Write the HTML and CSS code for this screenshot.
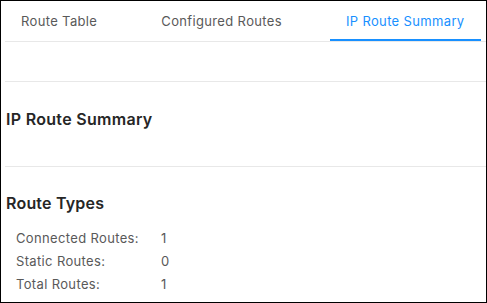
FILE: index.html
```html
<!DOCTYPE html>
<html>
<head>
<meta charset="utf-8">
<link rel="stylesheet" href="styles.css">
</head>
<body>
<div class="frame">
  <div class="tabs">
    <div class="tab">Route Table</div>
    <div class="tab">Configured Routes</div>
    <div class="tab active">IP Route Summary</div>
  </div>
  <div class="spacer"></div>
  <div class="title-block">
    <h2 class="title">IP Route Summary</h2>
  </div>
  <div class="section">
    <h3 class="section-title">Route Types</h3>
    <div class="rows">
      <div class="row"><span class="label">Connected Routes:</span><span class="value">1</span></div>
      <div class="row"><span class="label">Static Routes:</span><span class="value">0</span></div>
      <div class="row"><span class="label">Total Routes:</span><span class="value">1</span></div>
    </div>
  </div>
</div>
</body>
</html>
```
FILE: styles.css
```css
html, body {
  margin: 0;
  padding: 0;
  background: #fff;
}
.frame {
  width: 487px;
  height: 303px;
  box-sizing: border-box;
  border: 1px solid #000;
  padding-left: 4px;
  overflow: hidden;
  font-family: Inter, "Noto Sans", sans-serif;
  color: #262626;
}
.tabs {
  display: flex;
  gap: 32px;
  border-bottom: 1px solid #e8e8e8;
  height: 40px;
}
.tab {
  padding: 0 16px;
  height: 40px;
  box-sizing: border-box;
  display: flex;
  align-items: center;
  font-size: 13px;
  letter-spacing: 0.35px;
  color: #595959;
  border-bottom: 2px solid transparent;
  padding-top: 1px;
}
.tab.active {
  color: #1890ff;
  border-bottom-color: #1890ff;
}
.spacer {
  height: 39px;
  border-bottom: 1px solid #e8e8e8;
}
.title-block {
  height: 85px;
  box-sizing: border-box;
  padding-bottom: 11px;
  border-bottom: 1px solid #e8e8e8;
  display: flex;
  align-items: center;
}
.title {
  margin: 0;
  padding-left: 1px;
  font-size: 16px;
  font-weight: 600;
  letter-spacing: 0.3px;
  color: #262626;
}
.section {
  padding-top: 26px;
  padding-left: 1px;
}
.section-title {
  margin: 0;
  font-size: 16px;
  font-weight: 600;
  letter-spacing: 0.2px;
  color: #262626;
  line-height: 20px;
}
.rows {
  margin-top: 14px;
  padding-left: 10px;
}
.row {
  display: flex;
  font-size: 13px;
  letter-spacing: 0.35px;
  line-height: 23px;
  color: #595959;
}
.label {
  width: 145px;
}
```
